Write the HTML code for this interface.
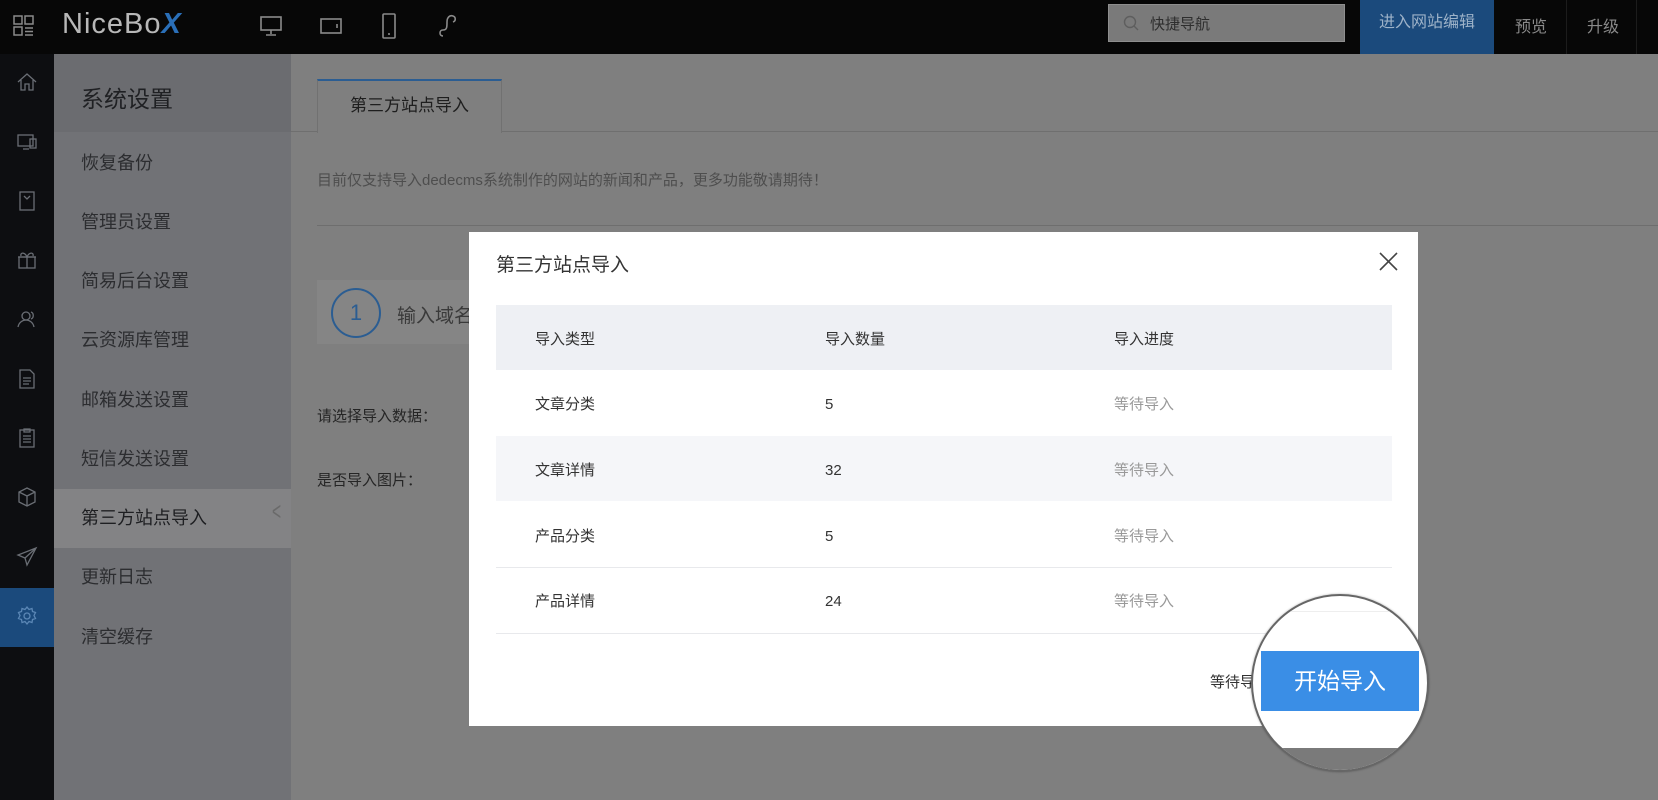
<!DOCTYPE html>
<html><head><meta charset="utf-8"><style>
*{margin:0;padding:0;box-sizing:border-box}
body{width:1658px;height:800px;overflow:hidden;background:#7f7f7f;font-family:"Liberation Sans","Noto Sans CJK SC",sans-serif;position:relative}
.a{position:absolute}
.top{left:0;top:0;width:1658px;height:54px;background:#070707}
.rail{left:0;top:54px;width:54px;height:746px;background:#0d0e11}
.sub{left:54px;top:54px;width:237px;height:746px;background:#717276}
.subh{left:54px;top:54px;width:237px;height:78px;background:#6b6c70}
.mi{left:81px;font-size:18px;color:#2c2d30;transform:translateY(-50%)}
.ic{left:15px;width:24px;height:24px}
.ic svg{width:24px;height:24px;stroke:#6a6e75;fill:none;stroke-width:1.3}
.t15{font-size:15px}
.n{margin-top:3px}
</style></head><body>
<div class="a top"></div>
<svg class="a" style="left:13px;top:15px" width="22" height="22" viewBox="0 0 22 22" fill="none" stroke="#8a8a8a" stroke-width="1.5"><rect x="1" y="1" width="8" height="8"/><rect x="12" y="1" width="8" height="8"/><rect x="1" y="12" width="8" height="8"/><path d="M12 13h8M12 16.5h8M12 20h8"/></svg>
<div class="a" style="left:62px;top:8px;font-size:29px;color:#b8b8b8;letter-spacing:1px;font-weight:400">NiceBo<span style="color:#2a6fb8;font-weight:bold;font-style:italic">X</span></div>
<svg class="a" style="left:259px;top:15px" width="24" height="22" viewBox="0 0 24 22" fill="none" stroke="#8a8a8a" stroke-width="1.6"><rect x="2" y="2" width="20" height="13"/><path d="M12 15v4M7 20h10"/></svg>
<svg class="a" style="left:319px;top:16px" width="24" height="20" viewBox="0 0 24 20" fill="none" stroke="#8a8a8a" stroke-width="1.6"><rect x="2" y="3" width="20" height="14"/><path d="M18 8v4"/></svg>
<svg class="a" style="left:380px;top:12px" width="18" height="28" viewBox="0 0 18 28" fill="none" stroke="#8a8a8a" stroke-width="1.6"><rect x="3" y="2" width="12" height="24" rx="1"/><path d="M8 22h2"/></svg>
<svg class="a" style="left:437px;top:12px" width="22" height="28" viewBox="0 0 22 28" fill="none" stroke="#8a8a8a" stroke-width="1.6"><path d="M6 24c-4 0-4-6 0-6s4-3 4-8 3-7 6-6 3 5 0 6"/></svg>
<div class="a" style="left:1108px;top:4px;width:237px;height:38px;background:#7a7a7a;border:1px solid #8e8e8e"></div>
<svg class="a" style="left:1123px;top:15px" width="16" height="16" viewBox="0 0 16 16" fill="none" stroke="#5e5e5e" stroke-width="1.4"><circle cx="7" cy="7" r="5.5"/><path d="M11 11l4 4"/></svg>
<div class="a t15" style="left:1150px;top:13px;color:#2e2e2e">快捷导航</div>
<div class="a" style="left:1360px;top:0;width:134px;height:54px;background:#1b4a7c;color:#9db2c8;font-size:16px;text-align:center;line-height:46px">进入网站编辑</div>
<div class="a" style="left:1566px;top:0;width:1px;height:54px;background:#1c1c1c"></div>
<div class="a" style="left:1636px;top:0;width:1px;height:54px;background:#1c1c1c"></div>
<div class="a" style="left:1515px;top:13px;font-size:16px;color:#8a8a8a">预览</div>
<div class="a" style="left:1587px;top:13px;font-size:16px;color:#8a8a8a">升级</div>

<div class="a rail"></div>
<div class="a" style="left:0;top:588px;width:54px;height:59px;background:#1b4a7c"></div>
<div class="a ic" style="top:70px"><svg viewBox="0 0 24 24"><path d="M3 12L12 4l9 8M6 10v10h4v-6h4v6h4V10"/></svg></div>
<div class="a ic" style="top:130px"><svg viewBox="0 0 24 24"><rect x="3" y="5" width="15" height="11"/><rect x="15" y="9" width="6" height="9"/><path d="M8 19h6"/></svg></div>
<div class="a ic" style="top:189px"><svg viewBox="0 0 24 24"><rect x="5" y="3" width="14" height="18"/><path d="M9 7l3 3 3-3"/></svg></div>
<div class="a ic" style="top:248px"><svg viewBox="0 0 24 24"><rect x="4" y="9" width="16" height="11"/><path d="M3 9h18M12 9v11M12 9c-2-5-7-5-6-1M12 9c2-5 7-5 6-1"/></svg></div>
<div class="a ic" style="top:307px"><svg viewBox="0 0 24 24"><circle cx="11" cy="9" r="4"/><path d="M3 20c1-5 5-7 8-7s7 2 8 7M16 5c3 1 3 6 0 7"/></svg></div>
<div class="a ic" style="top:367px"><svg viewBox="0 0 24 24"><path d="M5 3h10l4 4v14H5zM8 11h8M8 14h8M8 17h6"/></svg></div>
<div class="a ic" style="top:426px"><svg viewBox="0 0 24 24"><rect x="5" y="4" width="14" height="17"/><path d="M9 3h6v3H9zM8 10h8M8 13h8M8 16h8"/></svg></div>
<div class="a ic" style="top:485px"><svg viewBox="0 0 24 24"><path d="M12 3l8 4v10l-8 4-8-4V7zM4 7l8 4 8-4M12 11v10"/></svg></div>
<div class="a ic" style="top:544px"><svg viewBox="0 0 24 24"><path d="M21 4L3 11l7 3 2 7zM10 14l11-10"/></svg></div>
<div class="a ic" style="top:604px"><svg viewBox="0 0 24 24" style="stroke:#5b87b5"><circle cx="12" cy="12" r="3"/><path d="M12 3l2 2.5 3-1 .5 3 3 1-1.5 3 1.5 3-3 1-.5 3-3-1-2 2.5-2-2.5-3 1-.5-3-3-1 1.5-3-1.5-3 3-1 .5-3 3 1z"/></svg></div>

<div class="a sub"></div>
<div class="a subh"></div>
<div class="a" style="left:81px;top:80px;font-size:23px;color:#1f2023">系统设置</div>
<div class="a mi" style="top:162px">恢复备份</div>
<div class="a mi" style="top:221px">管理员设置</div>
<div class="a mi" style="top:280px">简易后台设置</div>
<div class="a mi" style="top:339px">云资源库管理</div>
<div class="a mi" style="top:399px">邮箱发送设置</div>
<div class="a mi" style="top:458px">短信发送设置</div>
<div class="a" style="left:54px;top:489px;width:237px;height:59px;background:#838385"></div>
<div class="a mi" style="top:517px;color:#1e1f22">第三方站点导入</div>
<div class="a" style="left:269px;top:496px;font-size:26px;color:#6a6a6a;transform:scaleX(.6)">&lt;</div>
<div class="a mi" style="top:576px">更新日志</div>
<div class="a mi" style="top:636px">清空缓存</div>

<div class="a" style="left:291px;top:131px;width:1367px;height:1px;background:#6f6f6f"></div>
<div class="a" style="left:317px;top:79px;width:185px;height:54px;background:#7f7f7f;border-top:2px solid #2b5d92;border-left:1px solid #717171;border-right:1px solid #717171;font-size:17px;color:#1e1e1e;text-align:center;line-height:50px">第三方站点导入</div>
<div class="a t15" style="left:317px;top:169px;color:#4e4e4e">目前仅支持导入dedecms系统制作的网站的新闻和产品，更多功能敬请期待！</div>
<div class="a" style="left:317px;top:225px;width:1341px;height:1px;background:#6e6e6e"></div>
<div class="a" style="left:317px;top:280px;width:160px;height:64px;background:#858585"></div>
<div class="a" style="left:331px;top:288px;width:50px;height:50px;border:2px solid #2b5d92;border-radius:50%;text-align:center;line-height:46px;font-size:22px;color:#2b5d92">1</div>
<div class="a" style="left:397px;top:301px;font-size:19px;color:#3a3a3a">输入域名</div>
<div class="a t15" style="left:317px;top:405px;color:#252525">请选择导入数据：</div>
<div class="a t15" style="left:317px;top:469px;color:#252525">是否导入图片：</div>

<div class="a" style="left:469px;top:232px;width:949px;height:494px;background:#fff"></div>
<div class="a" style="left:496px;top:250px;font-size:19px;color:#333">第三方站点导入</div>
<svg class="a" style="left:1379px;top:252px" width="19" height="19" viewBox="0 0 19 19" stroke="#444" stroke-width="1.6"><path d="M1 1l17 17M18 1L1 18"/></svg>
<div class="a" style="left:496px;top:305px;width:896px;height:65px;background:#eef0f4"></div>
<div class="a" style="left:496px;top:436px;width:896px;height:65px;background:#f5f6f9"></div>
<div class="a" style="left:496px;top:567px;width:896px;height:1px;background:#e8e9ec"></div>
<div class="a" style="left:496px;top:633px;width:896px;height:1px;background:#e8e9ec"></div>
<div class="a t15" style="left:535px;top:328px;color:#333">导入类型</div><div class="a t15" style="left:825px;top:328px;color:#333">导入数量</div><div class="a t15" style="left:1114px;top:328px;color:#333">导入进度</div>
<div class="a t15" style="left:535px;top:393px;color:#333">文章分类</div><div class="a t15 n" style="left:825px;top:393px;color:#333">5</div><div class="a t15" style="left:1114px;top:393px;color:#999">等待导入</div>
<div class="a t15" style="left:535px;top:459px;color:#333">文章详情</div><div class="a t15 n" style="left:825px;top:459px;color:#333">32</div><div class="a t15" style="left:1114px;top:459px;color:#999">等待导入</div>
<div class="a t15" style="left:535px;top:525px;color:#333">产品分类</div><div class="a t15 n" style="left:825px;top:525px;color:#333">5</div><div class="a t15" style="left:1114px;top:525px;color:#999">等待导入</div>
<div class="a t15" style="left:535px;top:590px;color:#333">产品详情</div><div class="a t15 n" style="left:825px;top:590px;color:#333">24</div><div class="a t15" style="left:1114px;top:590px;color:#999">等待导入</div>
<div class="a t15" style="left:1210px;top:671px;color:#333">等待导入</div>

<div class="a" style="left:1251px;top:594px;width:178px;height:178px;border-radius:50%;border:2px solid #666;background:#fff;overflow:hidden;box-shadow:0 0 2px rgba(0,0,0,.3)">
 <div class="a" style="left:-2px;top:152px;width:180px;height:30px;background:#7a7a7a"></div>
 <div class="a" style="left:-2px;top:15px;width:180px;height:1px;background:#eee"></div>
 <div class="a" style="left:8px;top:55px;width:158px;height:60px;background:#3a8ee6;color:#fff;font-size:23px;text-align:center;line-height:60px">开始导入</div>
</div>
</body></html>
